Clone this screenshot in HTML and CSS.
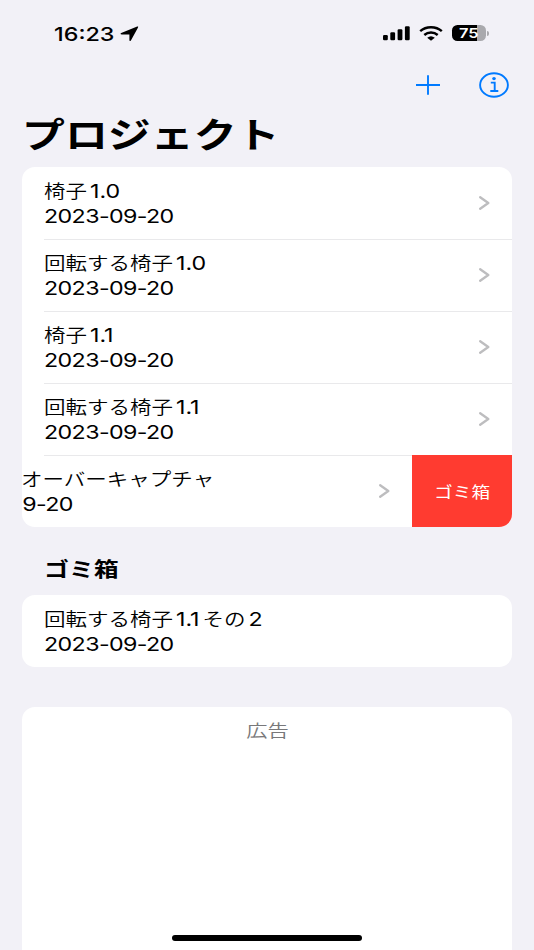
FILE: index.html
```html
<!DOCTYPE html>
<html lang="ja">
<head>
  <meta charset="UTF-8">
  <meta name="viewport" content="width=device-width, initial-scale=1.0">
  <title>プロジェクト</title>
  <link rel="stylesheet" href="styles.css">
</head>
<body>
  <div class="status-bar">
    <span class="wide clock">16:23</span>
    <svg class="location" width="19" height="16" viewBox="0 0 19 16"><path d="M17.2.6Q18.8.1 17.9 1.7L10.9 14.4Q9.5 16 9.4 14V8.6H2Q-.6 8 1.2 6.9z"/></svg>
    <svg class="signal" width="27" height="15" viewBox="0 0 27 15">
      <rect x="0" y="9" width="4.8" height="5.3" rx="1.2"/>
      <rect x="7.3" y="6.3" width="4.8" height="8" rx="1.2"/>
      <rect x="14.6" y="3.2" width="4.8" height="11.1" rx="1.2"/>
      <rect x="21.9" y="0.3" width="4.8" height="14" rx="1.2"/>
    </svg>
    <svg class="wifi" width="24" height="15" viewBox="0 0 24 15">
      <path class="arc" d="M1.2 5.2C7-.1 17-.1 22.8 5.2M5.3 9c3.8-3.3 9.6-3.3 13.4 0"/>
      <path d="M8.2 11.7q3.8-3 7.6 0L12 14.8z"/>
    </svg>
    <div class="battery"><span class="wide">75</span></div>
    <div class="battery-cap"></div>
  </div>

  <nav class="toolbar">
    <svg class="icon" width="24" height="20" viewBox="0 0 24 20"><path d="M0 10h24M12 .3v19.4"/></svg>
    <svg class="icon" width="30" height="26" viewBox="0 0 30 26">
      <ellipse cx="15" cy="13" rx="13.9" ry="11.7"/>
      <path d="M11.8 10.6h3.9v8.3M11.3 19h8"/>
      <ellipse class="dot" cx="15" cy="6.6" rx="1.8" ry="1.6"/>
    </svg>
  </nav>

  <h1><span class="wide">プロジェクト</span></h1>

  <main>
    <ul class="card">
      <li class="row">
        <div class="wide"><p><span class="ja">椅子</span><span class="num">1.0</span></p><p class="date">2023-09-20</p></div>
        <svg class="chevron" width="11" height="14" viewBox="0 0 11 14"><path d="M1.2 1.2 9.3 7 1.2 12.8"/></svg>
      </li>
      <li class="row">
        <div class="wide"><p><span class="ja">回転する椅子</span><span class="num">1.0</span></p><p class="date">2023-09-20</p></div>
        <svg class="chevron" width="11" height="14" viewBox="0 0 11 14"><path d="M1.2 1.2 9.3 7 1.2 12.8"/></svg>
      </li>
      <li class="row">
        <div class="wide"><p><span class="ja">椅子</span><span class="num">1.1</span></p><p class="date">2023-09-20</p></div>
        <svg class="chevron" width="11" height="14" viewBox="0 0 11 14"><path d="M1.2 1.2 9.3 7 1.2 12.8"/></svg>
      </li>
      <li class="row">
        <div class="wide"><p><span class="ja">回転する椅子</span><span class="num">1.1</span></p><p class="date">2023-09-20</p></div>
        <svg class="chevron" width="11" height="14" viewBox="0 0 11 14"><path d="M1.2 1.2 9.3 7 1.2 12.8"/></svg>
      </li>
      <li class="row swiped">
        <div class="wide"><p><span class="ja">オーバーキャプチャ</span></p><p class="date">9-20</p></div>
        <svg class="chevron" width="11" height="14" viewBox="0 0 11 14"><path d="M1.2 1.2 9.3 7 1.2 12.8"/></svg>
        <button class="delete"><span class="wide">ゴミ箱</span></button>
      </li>
    </ul>

    <h2><span class="wide">ゴミ箱</span></h2>
    <ul class="card">
      <li class="row">
        <div class="wide"><p><span class="ja">回転する椅子</span><span class="num">1.1</span><span class="ja">その</span><span class="num">2</span></p><p class="date">2023-09-20</p></div>
      </li>
    </ul>

    <section class="card ad"><span class="wide">広告</span></section>
  </main>

  <div class="home-indicator"></div>
</body>
</html>
```
FILE: styles.css
```css
* {
  box-sizing: border-box;
}

body {
  margin: 0;
  height: 950px;
  overflow: hidden;
  display: flex;
  flex-direction: column;
  background-color: #f2f1f7;
  color: #000;
  font-family: Inter, "Noto Sans CJK JP", sans-serif;
}

h1, h2, p, ul {
  margin: 0;
  padding: 0;
}

/* All lettering is set wider than normal */
.wide {
  display: inline-block;
  transform: scaleX(1.216);
  transform-origin: left center;
  white-space: nowrap;
}

/* Status bar */
.status-bar {
  flex: none;
  height: 66px;
  display: flex;
  align-items: center;
  padding-left: 54px;
}

.clock {
  width: 66px;
  padding-top: 1px;
  font-size: 19.2px;
  font-weight: 500;
  line-height: 24px;
}

.location {
  margin-top: 1px;
}

.signal {
  margin-left: 244px;
}

.wifi {
  margin-left: 9px;
}

.wifi .arc {
  fill: none;
  stroke: #000;
  stroke-width: 2.4;
}

.battery {
  width: 34px;
  height: 16px;
  margin-left: 9px;
  border-radius: 5.5px;
  background: linear-gradient(to right, #000 75%, #a9a9ad 75%);
  color: #fff;
  font-size: 13.5px;
  font-weight: 600;
  line-height: 16px;
  padding-left: 7px;
}

.battery-cap {
  width: 2px;
  height: 5px;
  margin-left: 1px;
  border-radius: 0 2px 2px 0;
  background-color: #a9a9ad;
}

/* Toolbar */
.toolbar {
  flex: none;
  height: 37px;
  display: flex;
  justify-content: flex-end;
  align-items: center;
  gap: 39px;
  padding-right: 25px;
}

.icon {
  fill: none;
  stroke: #007aff;
  stroke-width: 1.9;
}

.icon .dot {
  fill: #007aff;
  stroke: none;
}

h1 {
  flex: none;
  height: 64px;
  padding: 1px 0 0 22px;
  font-size: 35.3px;
  font-weight: 700;
  line-height: 64px;
}

/* Lists */
main {
  flex: 1;
  display: flex;
  flex-direction: column;
  padding: 0 22px;
}

.card {
  flex: none;
  list-style: none;
  background-color: #fff;
  border-radius: 13px;
  overflow: hidden;
}

.row {
  height: 72px;
  display: flex;
  align-items: center;
  justify-content: space-between;
  margin-left: 22px;
  padding-right: 22px;
  font-size: 19.1px;
}

.row > .wide {
  padding-top: 2px;
}

.row + .row {
  background: linear-gradient(#e9e9eb, #e9e9eb) 0 0 / 100% 1px no-repeat;
}

.row p {
  height: 24.8px;
  line-height: 24.8px;
}

.row .date {
  letter-spacing: -0.5px;
}

.ja {
  font-size: 17.7px;
  font-weight: 350;
}

.num {
  margin: 0 2.4px;
}

.chevron {
  fill: none;
  stroke: #bdbdbf;
  stroke-width: 2.3;
  stroke-linecap: round;
  stroke-linejoin: round;
}

.row.swiped {
  margin-left: 0;
  padding-right: 0;
  background-position: 22px 0;
}

.swiped > .wide {
  margin-left: -1px;
}

.swiped .date {
  padding-left: 1px;
}

.swiped .chevron {
  margin-left: auto;
  margin-right: 22px;
}

.delete {
  width: 100.5px;
  height: 72px;
  padding: 0;
  border: none;
  background-color: #ff3b30;
  color: #fff;
  font-family: inherit;
  font-size: 15.4px;
  font-weight: 400;
}

.delete .wide,
.ad .wide {
  transform-origin: center;
}

h2 {
  height: 68px;
  padding: 17px 0 0 22px;
  font-size: 20.5px;
  font-weight: 700;
  line-height: 52px;
}

.ad {
  flex: 1;
  margin-top: 40px;
  border-radius: 13px 13px 0 0;
  text-align: center;
  color: #78787a;
  font-size: 17.5px;
  font-weight: 350;
  line-height: 47px;
}

.home-indicator {
  position: absolute;
  left: 172px;
  top: 935px;
  width: 190px;
  height: 6px;
  border-radius: 3px;
  background-color: #000;
}
```
